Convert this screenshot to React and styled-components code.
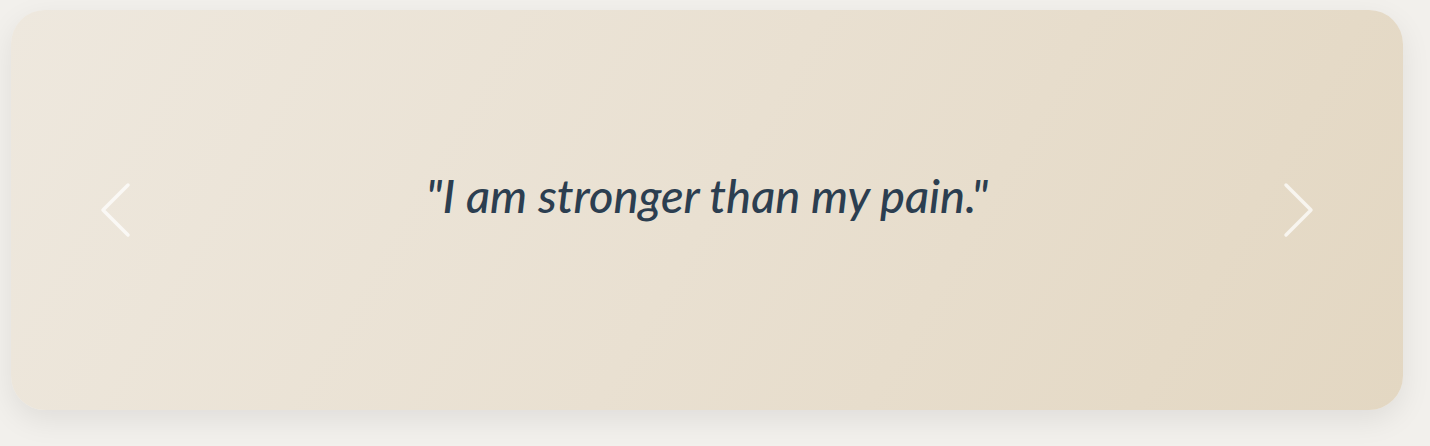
import React, { useState } from 'react';
import styled, { createGlobalStyle } from 'styled-components';

const quotes = [
  'I am stronger than my pain.',
  'One day at a time.',
  'Rest is part of healing.',
];

const GlobalStyle = createGlobalStyle`
  html, body {
    margin: 0;
    padding: 0;
    background: #f2f0ec;
  }
  body {
    font-family: Lato, "Open Sans", sans-serif;
  }
`;

const Page = styled.div`
  padding: 10px 27px 36px 11px;
`;

const Card = styled.section`
  position: relative;
  height: 400px;
  border-radius: 34px;
  background: linear-gradient(120deg, #eee8de 0%, #e9e0d1 50%, #e3d7c2 100%);
  box-shadow: 0 10px 30px rgba(0, 0, 0, 0.08);
  display: grid;
  grid-template-columns: 180px 1fr 180px;
  align-items: center;
`;

const Quote = styled.p`
  margin: 0 0 30px;
  text-align: center;
  font-family: Lato, sans-serif;
  font-style: italic;
  font-size: 47px;
  font-weight: 500;
  color: #2c3e50;
`;

const Arrow = styled.button`
  justify-self: ${(p) => (p.side === 'left' ? 'start' : 'end')};
  margin-left: ${(p) => (p.side === 'left' ? '88px' : '0')};
  margin-right: ${(p) => (p.side === 'right' ? '88px' : '0')};
  background: none;
  border: none;
  padding: 0;
  cursor: pointer;
  display: flex;
  color: rgba(255, 255, 255, 0.72);
`;

const Chevron = ({ dir }) => (
  <svg width="44" height="58" viewBox="0 0 44 58" fill="none">
    <polyline
      points={dir === 'left' ? '29,4 4,29 29,54' : '15,4 40,29 15,54'}
      stroke="currentColor"
      strokeWidth="3.5"
      strokeLinecap="round"
      strokeLinejoin="round"
    />
  </svg>
);

const App = () => {
  const [idx, setIdx] = useState(0);
  const go = (d) => setIdx((i) => (i + d + quotes.length) % quotes.length);

  return (
    <>
      <GlobalStyle />
      <Page>
        <Card>
          <Arrow side="left" onClick={() => go(-1)} aria-label="Previous">
            <Chevron dir="left" />
          </Arrow>
          <Quote>"{quotes[idx]}"</Quote>
          <Arrow side="right" onClick={() => go(1)} aria-label="Next">
            <Chevron dir="right" />
          </Arrow>
        </Card>
      </Page>
    </>
  );
};

export default App;
